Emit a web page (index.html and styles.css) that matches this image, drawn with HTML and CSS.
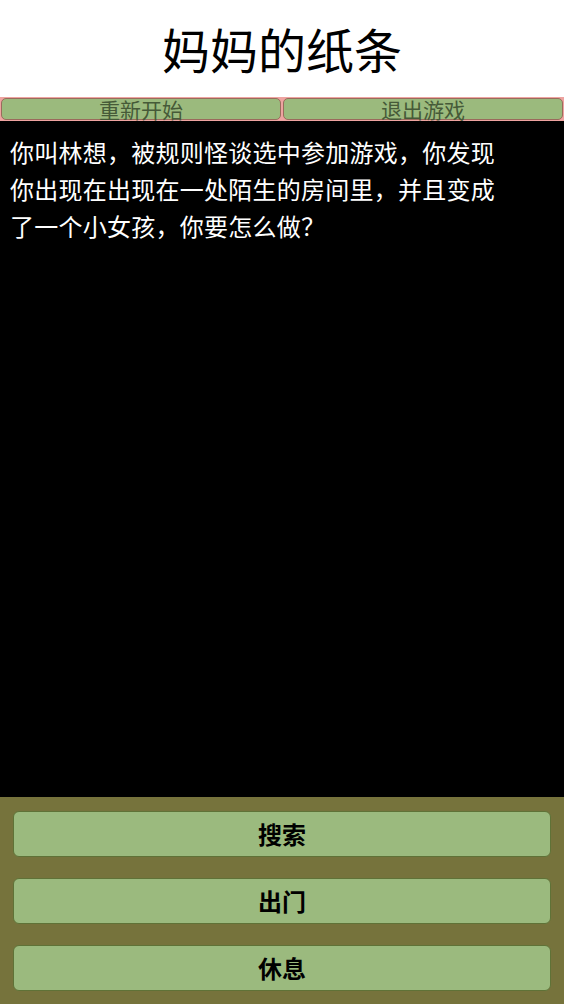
FILE: index.html
```html
<!DOCTYPE html>
<html lang="zh-CN">
<head>
<meta charset="utf-8">
<title>妈妈的纸条</title>
<link rel="stylesheet" href="styles.css">
</head>
<body>
<div class="app">
  <header class="title">妈妈的纸条</header>
  <nav class="toolbar">
    <button class="tool-btn">重新开始</button>
    <button class="tool-btn">退出游戏</button>
  </nav>
  <main class="story">
    <p class="story-text">你叫林想，被规则怪谈选中参加游戏，你发现你出现在出现在一处陌生的房间里，并且变成了一个小女孩，你要怎么做？</p>
  </main>
  <section class="actions">
    <button class="action-btn">搜索</button>
    <button class="action-btn">出门</button>
    <button class="action-btn">休息</button>
  </section>
</div>
</body>
</html>
```
FILE: styles.css
```css
* { box-sizing: border-box; }
html, body { margin: 0; padding: 0; }
body {
  font-family: "Noto Sans CJK SC", "Noto Sans", sans-serif;
  background: #ffffff;
}
.app {
  width: 564px;
  height: 1004px;
  display: flex;
  flex-direction: column;
}
.title {
  height: 97px;
  line-height: 97px;
  text-align: center;
  font-size: 48px;
  color: #000;
  flex: none;
}
.toolbar {
  flex: none;
  height: 24px;
  background: #eea3a0;
  display: flex;
  gap: 2px;
  padding: 1px;
}
.tool-btn {
  flex: 1;
  height: 22px;
  margin: 0;
  padding: 0;
  border: 1px solid #9a6b5c;
  border-radius: 5px;
  background: #9bba7d;
  color: #465a38;
  font-family: inherit;
  font-size: 21px;
  line-height: 20px;
  text-align: center;
  overflow: visible;
}
.story {
  flex: 1;
  background: #000;
  color: #fff;
  padding: 12px 10px;
}
.story-text {
  margin: 0;
  max-width: 500px;
  font-size: 24px;
  letter-spacing: 0.25px;
  line-height: 37px;
}
.actions {
  flex: none;
  height: 207px;
  background: #76733c;
  padding: 14px 13px 13px 13px;
  display: flex;
  flex-direction: column;
  gap: 21px;
}
.action-btn {
  height: 46px;
  margin: 0;
  padding: 0;
  border: 1px solid #5f7237;
  border-radius: 6px;
  background: #9bba7e;
  color: #000;
  font-family: inherit;
  font-size: 24px;
  line-height: 44px;
  font-weight: bold;
  text-align: center;
}
```
